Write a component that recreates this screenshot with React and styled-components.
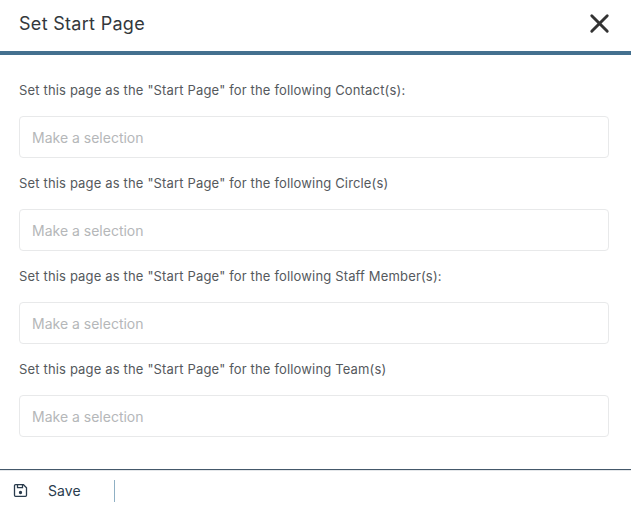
import React from 'react'
import styled, { createGlobalStyle } from 'styled-components'
import { X } from 'lucide-react'

const GlobalStyle = createGlobalStyle`
  html, body {
    margin: 0;
    padding: 0;
    background: #fff;
    font-family: Inter, "Open Sans", sans-serif;
  }
`

const Modal = styled.div`
  width: 631px;
  height: 506px;
  display: flex;
  flex-direction: column;
  overflow: hidden;
  background: #fff;
`

const Header = styled.header`
  height: 47px;
  flex: none;
  display: flex;
  align-items: center;
  justify-content: space-between;
  padding: 0 19px 4px;
  border-bottom: 4px solid #44708f;
`

const Title = styled.h1`
  margin: 0;
  font-size: 18px;
  font-weight: 400;
  letter-spacing: 0.3px;
  color: #33383c;
`

const Close = styled.button`
  display: flex;
  padding: 0;
  margin-right: -3px;
  border: 0;
  background: none;
  color: #333;
`

const Body = styled.div`
  flex: 1;
  padding: 26px 22px 0 19px;
`

const Field = styled.div`
  height: 93px;
`

const Label = styled.div`
  height: 18px;
  line-height: 18px;
  font-size: 13px;
  letter-spacing: 0.16px;
  color: #55595d;
  white-space: nowrap;
`

const Select = styled.div`
  box-sizing: border-box;
  height: 42px;
  margin-top: 17px;
  display: flex;
  align-items: center;
  padding: 0 12px;
  border: 1px solid #e8e9ea;
  border-radius: 4px;
  font-size: 14px;
  color: #b5b7b9;
`

const Footer = styled.footer`
  box-sizing: border-box;
  height: 37px;
  flex: none;
  display: flex;
  align-items: center;
  padding: 5px 0 0 13px;
  border-top: 1px solid #44586a;
  box-shadow: inset 0 1px 0 #e4e7ea;
`

const Save = styled.button`
  display: flex;
  align-items: center;
  gap: 20px;
  padding: 0;
  border: 0;
  background: none;
  font: inherit;
  font-size: 14px;
  letter-spacing: 0.1px;
  color: #2a3c4d;
`

const Divider = styled.div`
  width: 1px;
  height: 22px;
  margin-left: 33px;
  background: #8fb0c4;
`

const SaveIcon = () => (
  <svg width="15" height="15" viewBox="0 0 15 15" fill="none" stroke="#2a3c4d" strokeWidth="1.3">
    <path d="M2.500 1.700h8l3 3v7.600a1 1 0 0 1-1 1h-10a1 1 0 0 1-1-1v-9.600a1 1 0 0 1 1-1z" />
    <path d="M4.500 1.700v3h5v-3" />
    <circle cx="7.500" cy="9.500" r="1" fill="#2a3c4d" />
  </svg>
)

const fields = [
  'Set this page as the "Start Page" for the following Contact(s):',
  'Set this page as the "Start Page" for the following Circle(s)',
  'Set this page as the "Start Page" for the following Staff Member(s):',
  'Set this page as the "Start Page" for the following Team(s)',
]

const App = () => {
  return (
    <Modal>
      <GlobalStyle />
      <Header>
        <Title>Set Start Page</Title>
        <Close aria-label='Close'>
          <X size={31} strokeWidth={2.2} />
        </Close>
      </Header>
      <Body>
        {fields.map(label => (
          <Field key={label}>
            <Label>{label}</Label>
            <Select>Make a selection</Select>
          </Field>
        ))}
      </Body>
      <Footer>
        <Save>
          <SaveIcon />
          Save
        </Save>
        <Divider />
      </Footer>
    </Modal>
  )
}

export default App
